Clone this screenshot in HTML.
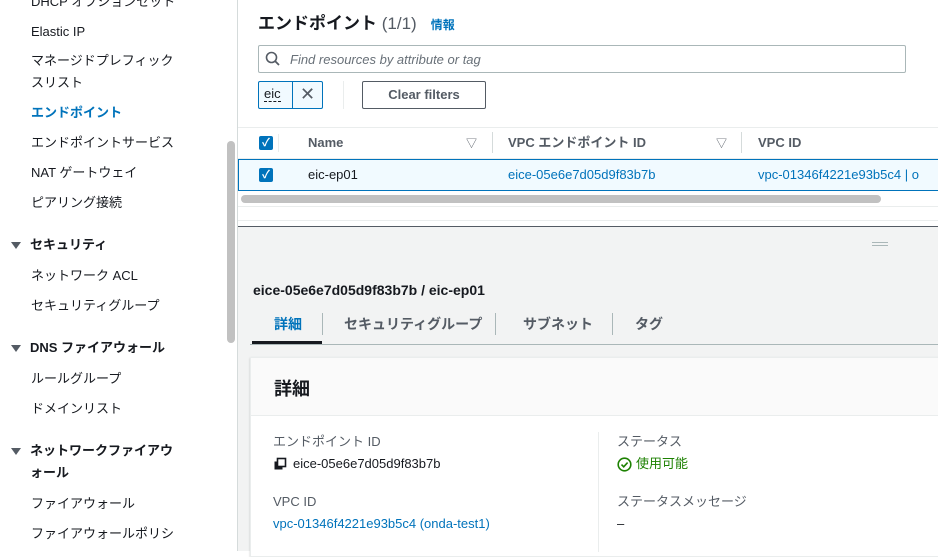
<!DOCTYPE html>
<html><head><meta charset="utf-8"><style>
*{margin:0;padding:0;box-sizing:border-box}
body{width:938px;height:551px;overflow:hidden;background:#fff;font-family:"Liberation Sans","Noto Sans CJK JP",sans-serif;color:#16191f;position:relative;font-size:13px}
.a{position:absolute;white-space:nowrap;line-height:16px}
.nav{font-size:13px;color:#16191f;line-height:16px}
.sec{font-weight:bold}
.tri{position:absolute;left:11px;width:0;height:0;border-left:5px solid transparent;border-right:5px solid transparent;border-top:7px solid #545b64}
.link{color:#0073bb}
.lbl{color:#545b64;font-size:13px}
</style></head><body>
<!-- sidebar -->
<div class="a nav" style="left:31px;top:-6px">DHCP オプションセット</div>
<div class="a nav" style="left:31px;top:24px">Elastic IP</div>
<div class="a nav" style="left:31px;top:53px">マネージドプレフィック</div>
<div class="a nav" style="left:31px;top:75px">スリスト</div>
<div class="a nav link" style="left:31px;top:105px;font-weight:bold">エンドポイント</div>
<div class="a nav" style="left:31px;top:135px">エンドポイントサービス</div>
<div class="a nav" style="left:31px;top:165px">NAT ゲートウェイ</div>
<div class="a nav" style="left:31px;top:195px">ピアリング接続</div>
<div class="tri" style="top:242px"></div>
<div class="a nav sec" style="left:30px;top:237px">セキュリティ</div>
<div class="a nav" style="left:31px;top:268px">ネットワーク ACL</div>
<div class="a nav" style="left:31px;top:298px">セキュリティグループ</div>
<div class="tri" style="top:345px"></div>
<div class="a nav sec" style="left:30px;top:340px">DNS ファイアウォール</div>
<div class="a nav" style="left:31px;top:371px">ルールグループ</div>
<div class="a nav" style="left:31px;top:401px">ドメインリスト</div>
<div class="tri" style="top:448px"></div>
<div class="a nav sec" style="left:30px;top:443px">ネットワークファイアウ</div>
<div class="a nav sec" style="left:30px;top:465px">ォール</div>
<div class="a nav" style="left:31px;top:496px">ファイアウォール</div>
<div class="a nav" style="left:31px;top:526px">ファイアウォールポリシ</div>
<div class="a" style="left:227px;top:141px;width:8px;height:202px;background:#c1c1c1;border-radius:4px"></div>
<div class="a" style="left:237px;top:0;width:1px;height:551px;background:#d5dbdb"></div>
<!-- main top -->
<div class="a" style="left:238px;top:0;width:700px;height:226px;background:#fff"></div>
<div class="a" style="left:258px;top:14px;font-size:17px;font-weight:bold;line-height:20px">エンドポイント <span style="font-weight:normal;color:#545b64">(1/1)</span><span class="link" style="font-size:12px;margin-left:14px">情報</span></div>
<div class="a" style="left:258px;top:45px;width:648px;height:28px;border:1px solid #aab7b8;border-radius:2px"></div>
<svg class="a" style="left:265px;top:51px" width="16" height="16" viewBox="0 0 16 16"><circle cx="6.5" cy="6.5" r="5" fill="none" stroke="#545b64" stroke-width="1.6"/><line x1="10" y1="10" x2="14" y2="14" stroke="#545b64" stroke-width="1.8"/></svg>
<div class="a" style="left:290px;top:52px;font-style:italic;color:#687078;font-size:13px">Find resources by attribute or tag</div>
<div class="a" style="left:258px;top:81px;width:65px;height:28px;border:1px solid #0073bb;border-radius:2px;background:#f1faff"></div>
<div class="a" style="left:292px;top:82px;width:1px;height:26px;background:#0073bb"></div>
<div class="a" style="left:264px;top:87px;font-size:13px;border-bottom:1px dashed #16191f;line-height:14px">eic</div>
<div class="a" style="left:300px;top:86px;font-size:18px;color:#545b64">✕</div>
<div class="a" style="left:343px;top:81px;width:1px;height:28px;background:#eaeded"></div>
<div class="a" style="left:362px;top:81px;width:124px;height:28px;border:1px solid #545b64;border-radius:2px;text-align:center;line-height:26px;font-weight:bold;color:#545b64">Clear filters</div>
<div class="a" style="left:238px;top:127px;width:700px;height:1px;background:#eaeded"></div>
<div class="a" style="left:238px;top:158px;width:700px;height:1px;background:#eaeded"></div>
<div class="a" style="left:259px;top:136px;width:14px;height:14px;background:#0073bb;border-radius:2px;color:#fff;font-size:11px;text-align:center;line-height:14px;font-weight:bold">✓</div>
<div class="a" style="left:278px;top:134px;width:1px;height:18px;background:#eaeded"></div>
<div class="a" style="left:308px;top:135px;font-weight:bold;color:#545b64">Name</div>
<div class="a" style="left:466px;top:136px;color:#545b64;font-size:11px">▽</div>
<div class="a" style="left:492px;top:132px;width:1px;height:21px;background:#d5dbdb"></div>
<div class="a" style="left:508px;top:135px;font-weight:bold;color:#545b64">VPC エンドポイント ID</div>
<div class="a" style="left:716px;top:136px;color:#545b64;font-size:11px">▽</div>
<div class="a" style="left:741px;top:132px;width:1px;height:21px;background:#d5dbdb"></div>
<div class="a" style="left:758px;top:135px;font-weight:bold;color:#545b64">VPC ID</div>
<div class="a" style="left:238px;top:159px;width:702px;height:32px;background:#f1faff;border:1px solid #0073bb"></div>
<div class="a" style="left:259px;top:168px;width:14px;height:14px;background:#0073bb;border-radius:2px;color:#fff;font-size:11px;text-align:center;line-height:14px;font-weight:bold">✓</div>
<div class="a" style="left:308px;top:167px">eic-ep01</div>
<div class="a link" style="left:508px;top:167px">eice-05e6e7d05d9f83b7b</div>
<div class="a link" style="left:758px;top:167px">vpc-01346f4221e93b5c4 | o</div>
<div class="a" style="left:241px;top:195px;width:640px;height:8px;background:#c1c1c1;border-radius:4px"></div>
<div class="a" style="left:238px;top:206px;width:700px;height:1px;background:#eaeded"></div>
<div class="a" style="left:238px;top:220px;width:700px;height:1px;background:#eaeded"></div>
<div class="a" style="left:238px;top:226px;width:700px;height:325px;background:#f2f3f3;border-top:1px solid #545b64"></div>
<div class="a" style="left:872px;top:242px;width:16px;height:4px;border-top:1px solid #aab7b8;border-bottom:1px solid #aab7b8"></div>
<div class="a" style="left:253px;top:282px;font-size:14px;font-weight:bold">eice-05e6e7d05d9f83b7b / eic-ep01</div>
<div class="a link" style="left:274px;top:316px;font-weight:bold;font-size:14px">詳細</div>
<div class="a" style="left:252px;top:341px;width:70px;height:3px;background:#16191f"></div>
<div class="a" style="left:322px;top:313px;width:1px;height:22px;background:#aab7b8"></div>
<div class="a" style="left:344px;top:316px;font-weight:bold;font-size:14px;color:#545b64">セキュリティグループ</div>
<div class="a" style="left:495px;top:313px;width:1px;height:22px;background:#aab7b8"></div>
<div class="a" style="left:523px;top:316px;font-weight:bold;font-size:14px;color:#545b64">サブネット</div>
<div class="a" style="left:612px;top:313px;width:1px;height:22px;background:#aab7b8"></div>
<div class="a" style="left:635px;top:316px;font-weight:bold;font-size:14px;color:#545b64">タグ</div>
<div class="a" style="left:250px;top:344px;width:688px;height:1px;background:#aab7b8"></div>
<div class="a" style="left:250px;top:357px;width:690px;height:200px;background:#fff;border:1px solid #eaeded;box-shadow:0 1px 2px rgba(0,0,0,.2)"></div>
<div class="a" style="left:251px;top:358px;width:688px;height:58px;background:#fafafa;border-bottom:1px solid #eaeded"></div>
<div class="a" style="left:274px;top:378px;font-size:18px;font-weight:bold;line-height:22px">詳細</div>
<div class="a" style="left:598px;top:432px;width:1px;height:120px;background:#eaeded"></div>
<div class="a lbl" style="left:273px;top:434px">エンドポイント ID</div>
<svg class="a" style="left:273px;top:457px" width="14" height="14" viewBox="0 0 14 14"><rect x="1.5" y="4.5" width="8" height="8" fill="#16191f"/><rect x="4.5" y="1.5" width="8" height="8" fill="#fff" stroke="#16191f" stroke-width="1.6"/></svg>
<div class="a" style="left:293px;top:456px">eice-05e6e7d05d9f83b7b</div>
<div class="a lbl" style="left:273px;top:494px">VPC ID</div>
<div class="a link" style="left:273px;top:516px">vpc-01346f4221e93b5c4 (onda-test1)</div>
<div class="a lbl" style="left:617px;top:434px">ステータス</div>
<svg class="a" style="left:617px;top:457px" width="15" height="15" viewBox="0 0 15 15"><circle cx="7.5" cy="7.5" r="6.3" fill="none" stroke="#1d8102" stroke-width="1.6"/><path d="M4.5 7.6l2.2 2.2 3.9-4.2" fill="none" stroke="#1d8102" stroke-width="1.6"/></svg>
<div class="a" style="left:636px;top:456px;color:#1d8102">使用可能</div>
<div class="a lbl" style="left:617px;top:494px">ステータスメッセージ</div>
<div class="a" style="left:617px;top:516px">–</div>
</body></html>
